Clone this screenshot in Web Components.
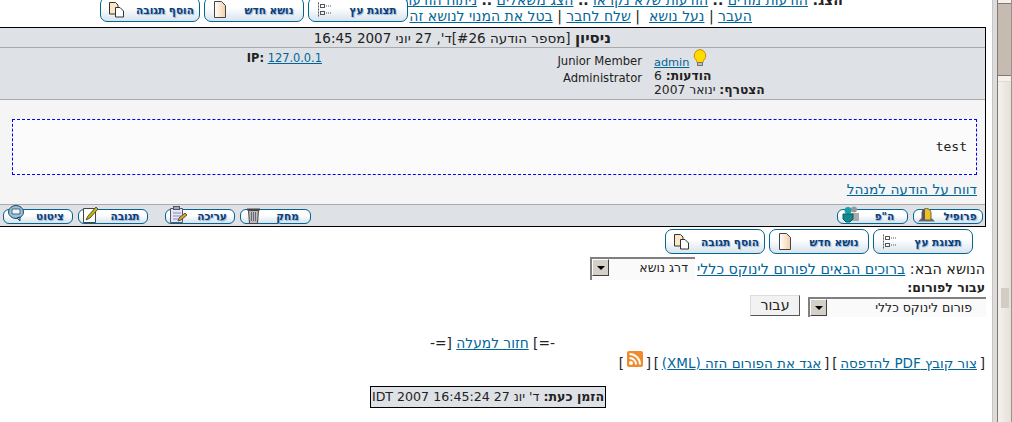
<!DOCTYPE html>
<html lang="he">
<head>
<meta charset="utf-8">
<title>פורום</title>
<style>
  html, body { margin: 0; height: 100%; overflow: hidden; background: #fff; }
</style>
</head>
<body>
<forum-page></forum-page>

<script>
const ICONS = {
  reply: `<svg width="17" height="17" viewBox="0 0 17 17"><path d="M1.500 1.500h6l2.500 2.500v9h-8.500z" fill="#fbe6c8" stroke="#333"/><path d="M7.500 6.500h4.500l3.500 3.500v6h-8z" fill="#fff" stroke="#333"/></svg>`,
  page: `<svg width="12" height="17" viewBox="0 0 12 17"><defs><linearGradient id="pg" x1="0" x2="1"><stop offset="0" stop-color="#fff"/><stop offset="1" stop-color="#f3cfa8"/></linearGradient></defs><path d="M.5.5h7l4 4v12H.5z" fill="url(#pg)" stroke="#444"/></svg>`,
  tree: `<svg width="15" height="15" viewBox="0 0 15 15"><g fill="none" stroke="#555"><path d="M1.500.5v14" stroke-dasharray="2 1"/><rect x="3.500" y="2.500" width="4" height="3"/><rect x="3.500" y="9.500" width="4" height="3"/><path d="M9 4h5M9 11h5" stroke-dasharray="1 1"/></g></svg>`,
  quote: `<svg width="16" height="16" viewBox="0 0 16 16" style="margin-top:-6px"><ellipse cx="8" cy="7" rx="7.500" ry="6.500" fill="#8fc3e6" stroke="#245"/><path d="M4 4h8v5H4z" fill="#eaf4fb" stroke="#567"/><path d="M9 13l3 3v-4z" fill="#8fc3e6" stroke="#245"/></svg>`,
  replyPen: `<svg width="17" height="17" viewBox="0 0 17 17" style="margin-top:-3px"><path d="M.5 2.500h12v14H.5z" fill="#fff" stroke="#444"/><path d="M3 14l2-4 8-9 2 2-8 9z" fill="#c8b400" stroke="#554"/></svg>`,
  edit: `<svg width="17" height="17" viewBox="0 0 17 17" style="margin-top:-3px"><path d="M.5 2.500h12v14H.5z" fill="#e6e6f6" stroke="#556"/><rect x="3.500" y=".5" width="6" height="3" fill="#9ab" stroke="#556"/><path d="M3 7h8M3 10h8M3 13h5" stroke="#8a8ac8"/><path d="M8 15l1-3 6-5 2 2-6 5z" fill="#e0a020" stroke="#554"/></svg>`,
  trash: `<svg width="13" height="17" viewBox="0 0 13 17" style="margin-top:-2px"><path d="M1.500 3.500h10l-1 13h-8z" fill="#bbb" stroke="#444"/><path d="M0 2.500h13" stroke="#444" stroke-width="2"/><path d="M4.500 5v9M6.500 5v9M8.500 5v9" stroke="#667"/></svg>`,
  pm: `<svg width="17" height="17" viewBox="0 0 17 17" style="margin-top:-3px"><circle cx="12" cy="3.500" r="3" fill="#999"/><path d="M8 7h9v8h-7z" fill="#aaa"/><circle cx="6" cy="4.500" r="3.500" fill="#18a0a8"/><path d="M1 8h10v5l-3 3H4l-3-3z" fill="#128890" stroke="#0a5a60"/></svg>`,
  profile: `<svg width="17" height="14" viewBox="0 0 17 14" style="margin-top:-2px"><path d="M0 13.500h17l-3-3H3z" fill="#667"/><path d="M4 12V5a4.500 4.500 0 0 1 9 0v7z" fill="#f0c020" stroke="#664"/><path d="M4 12V5a4.500 4.500 0 0 1 3-4.200V12z" fill="#556"/></svg>`
};

const SHARED_FONT = `"DejaVu Sans", "Liberation Sans", sans-serif`;

class ForumButton extends HTMLElement {
  connectedCallback() {
    const small = this.hasAttribute('small');
    const icon = ICONS[this.getAttribute('icon')] || '';
    this.attachShadow({ mode: 'open' }).innerHTML = `
      <style>
        :host { display: inline-flex; align-items: center; box-sizing: border-box; direction: rtl; flex: none;
          width: ${this.getAttribute('w') || 100}px; height: ${small ? 15 : 25}px;
          border: 1px solid #05638f; border-radius: ${small ? 6 : 7}px;
          background: linear-gradient(#fff 40%, #d8e4ee); }
        span { flex: 1; text-align: center; font: bold 10.500px ${SHARED_FONT}; color: #0a3f78;
          text-shadow: 1px 1px 1px #8fb0d6; white-space: nowrap; }
        i { display: flex; flex: none; width: ${small ? 24 : 30}px; justify-content: center; align-items: center; height: 100%; }
        svg { flex: none; overflow: visible; }
      </style>
      <span><slot></slot></span><i>${icon}</i>`;
  }
}
customElements.define('forum-button', ForumButton);

class FakeSelect extends HTMLElement {
  connectedCallback() {
    this.attachShadow({ mode: 'open' }).innerHTML = `
      <style>
        :host { display: inline-flex; box-sizing: border-box; direction: ltr; flex: none; background: #fafafa;
          height: ${this.getAttribute('h') || 23}px; width: ${this.getAttribute('w')}px;
          border-left: 2px solid #808080; border-top: 2px solid #808080; }
        b { flex: none; width: 17px; height: 17px; background: #d4d0c8; border: 1px solid; border-color: #fff #404040 #404040 #fff;
          display: flex; align-items: center; justify-content: center; box-sizing: border-box; }
        b::after { content: ""; border: 4px solid transparent; border-top: 4px solid #000; border-bottom: 0; }
        span { flex: 1; direction: rtl; font-size: 12.500px; line-height: 16px; padding: 1px ${this.getAttribute('pad') || 7}px 0 0; white-space: nowrap; }
      </style>
      <b></b><span><slot></slot></span>`;
  }
}
customElements.define('fake-select', FakeSelect);

class PostCard extends HTMLElement {
  constructor() {
    super();
    this.attachShadow({ mode: 'open' }).innerHTML = `
      <style>
        :host { display: block; border: 1px solid #000; border-left: 0; color: #222; box-sizing: border-box; width: 986px; margin-right: 6px; direction: rtl; }
        .bar { height: 20px; background: #dee1e5; border-bottom: 1px solid #aaa; box-sizing: border-box; display: flex; align-items: center; padding-right: 374px; white-space: nowrap; font-size: 13.500px; }
        .head { height: 52px; background: #dee1e5; border-bottom: 1px solid #aaa; box-sizing: border-box; display: flex; }
        .user { width: 331px; flex: none; text-align: left; font-size: 12.300px; line-height: 14px; padding-top: 1px; box-sizing: border-box; }
        .rank { width: 300px; flex: none; margin-right: 12px; direction: ltr; text-align: right; font-size: 11.600px; line-height: 17px; padding-top: 5px; }
        .ip { flex: 1; direction: ltr; text-align: right; padding: 3px 20px 0 0; font-size: 11.400px; }
        .body { background: #f5f5f5; height: 104px; padding: 19px 8px 0 12px; box-sizing: border-box; }
        .msg { height: 56px; background: #fbfbfb; border: 1px dashed #0000ff; box-sizing: border-box; font: 13px "DejaVu Sans Mono", monospace; padding: 19px 9px 0 0; }
        .report { font-size: 13.700px; margin: 6px 0 0 -1px; line-height: 17px; text-align: right; }
        .foot { height: 22px; background: #dee1e5; border-top: 1px solid #aaa; box-sizing: border-box; display: flex; align-items: center; justify-content: space-between; padding: 1px 2px 0 3px; }
      </style>
      <div class="bar"><slot name="title"></slot></div>
      <div class="head">
        <div class="user"><slot name="user"></slot></div>
        <div class="rank"><slot name="rank"></slot></div>
        <div class="ip"><slot name="ip"></slot></div>
      </div>
      <div class="body">
        <div class="msg"><slot name="message"></slot></div>
        <div class="report"><slot name="report"></slot></div>
      </div>
      <div class="foot"><slot name="foot-right"></slot><slot name="foot-left"></slot></div>`;
  }
}
customElements.define('post-card', PostCard);

class PageScrollbar extends HTMLElement {
  constructor() {
    super();
    this.attachShadow({ mode: 'open' }).innerHTML = `
      <style>
        :host { display: flex; flex: none; width: 20px; height: 422px; box-sizing: border-box; background: #dcdcdc; border-left: 1px solid #c4c4c4; padding-left: 4px; }
        .track { flex: 1; display: flex; flex-direction: column; border-left: 1px solid #84786c; border-right: 1px solid #9c9288; }
        .cap { height: 4px; background: #f4f1ec; border-bottom: 1px solid #84786c; box-sizing: border-box; }
        .dark { height: 72px; background: #c6bbb0; border-bottom: 1px solid #84786c; box-sizing: border-box; }
        .low { height: 6px; background: #f4f1ec; border-bottom: 1px solid #ddd; box-sizing: border-box; }
        .rest { flex: 1; background: linear-gradient(90deg, #f4f1ec, #e6e0d9); padding-top: 206px; display: flex; justify-content: center; }
        .grip { width: 8px; height: 20px; background: radial-gradient(circle, #d2ccc5 0 1px, transparent 1px) 0 0 / 2px 2px; }
      </style>
      <div class="track">
        <div class="cap"></div><div class="dark"></div><div class="low"></div>
        <div class="rest"><div class="grip"></div></div>
      </div>`;
  }
}
customElements.define('page-scrollbar', PageScrollbar);

class ForumPage extends HTMLElement {
  constructor() {
    super();
    this.attachShadow({ mode: 'open' }).innerHTML = `
      <style>
        :host { display: flex; height: 422px; width: 1012px; overflow: hidden; font-family: ${SHARED_FONT}; font-size: 12.500px; color: #222; }
        .main { width: 992px; height: 422px; overflow: hidden; flex: none; }
        .inner { margin-top: -8px; direction: rtl; }
        a { color: #006699; text-decoration: underline; }
        .links { font-size: 14px; line-height: 17px; height: 35px; position: relative; }
        .line1 { height: 16px; padding-right: 149px; white-space: nowrap; }
        .line2 { padding-right: 240px; white-space: nowrap; }
        .topbtns { display: flex; gap: 4px; position: absolute; left: 100px; top: 5px; direction: ltr; }
        .botbtns { display: flex; gap: 4px; direction: ltr; margin: 2px 0 0 665px; }
        .next { display: flex; align-items: center; gap: 2px; height: 23px; padding-right: 7px; margin-top: 3px; font-size: 14.300px; white-space: nowrap; }
        .jump { padding-right: 7px; font: bold 12.500px/15px ${SHARED_FONT}; height: 15px; }
        .jumpctl { display: flex; padding-right: 6px; gap: 8px; height: 22px; }
        .jumpctl fake-select { margin-top: 2px; }
        .go { font-size: 14.300px; width: 50px; height: 21px; box-sizing: border-box; background: #f2f2f2; border: 1px solid; border-color: #ddd #555 #555 #ddd; text-align: center; line-height: 18px; }
        .back { text-align: center; font-size: 13.800px; margin-top: 18px; height: 16px; line-height: 16px; padding-right: 7px; white-space: nowrap; }
        .rss { display: flex; align-items: center; padding-right: 7px; font-size: 13.500px; word-spacing: -1.500px; height: 22px; margin-top: 1px; white-space: pre; }
        .rss a { word-spacing: 0; }
        .rss svg { margin: -8px 0 0; flex: none; }
        .now { width: 236px; margin: 12px 386px 0 0; box-sizing: border-box; height: 22px; background: #dee1e5; border: 1px solid #000; font-size: 12.600px; white-space: nowrap; line-height: 19px; text-align: center; }
      </style>
      <div class="main"><div class="inner">
        <div class="links">
          <div class="line1"><b>הצג:</b> <a>הודעות מודים</a> <b>..</b> <a>הודעות שלא נקראו</a> <b>..</b> <a>הצג משאלים</a> <b>..</b> <a>ניתוח הודעות</a></div>
          <div class="line2"><a>העבר</a> | <a>נעל נושא</a> &nbsp;| <a>שלח לחבר</a> | <a>בטל את המנוי לנושא זה</a></div>
          <div class="topbtns">
            <forum-button icon="reply">הוסף תגובה</forum-button>
            <forum-button icon="page">נושא חדש</forum-button>
            <forum-button icon="tree">תצוגת עץ</forum-button>
          </div>
        </div>
        <post-card>
          <span slot="title"><b style="font-size:15px">ניסיון</b> [מספר הודעה #26]ד', 27 יוני 2007 16:45</span>
          <div slot="user">
            <div dir="ltr" style="height:20px;font-size:11.300px;line-height:24px;white-space:nowrap"><a>admin</a> <svg width="14" height="17" viewBox="0 0 14 17"><path d="M7 .5a6.200 6.200 0 0 0-3.500 11l.5 2h6l.5-2A6.200 6.200 0 0 0 7 .5z" fill="#ffdc00" stroke="#d08a10"/><rect x="4.500" y="13.500" width="5" height="3" fill="#bbb" stroke="#777"/></svg></div>
            <b>הודעות:</b> 6<br><b>הצטרף:</b> ינואר 2007
          </div>
          <div slot="rank">Junior Member<br>Administrator</div>
          <div slot="ip"><b>IP:</b> <a>127.0.0.1</a></div>
          <span slot="message">test</span>
          <a slot="report">דווח על הודעה למנהל</a>
          <div slot="foot-right" style="display:flex;gap:5px">
            <forum-button small w="70" icon="profile">פרופיל</forum-button>
            <forum-button small w="71" icon="pm">ה"פ</forum-button>
          </div>
          <div slot="foot-left" style="display:flex;gap:5px;direction:ltr">
            <forum-button small w="70" icon="quote">ציטוט</forum-button>
            <forum-button small w="70" icon="replyPen">תגובה</forum-button>
            <forum-button small w="70" icon="edit" style="margin-left:12px">עריכה</forum-button>
            <forum-button small w="71" icon="trash">מחק</forum-button>
          </div>
        </post-card>
        <div class="botbtns">
          <forum-button icon="reply">הוסף תגובה</forum-button>
          <forum-button icon="page">נושא חדש</forum-button>
          <forum-button icon="tree">תצוגת עץ</forum-button>
        </div>
        <div class="next"><span>הנושא הבא: <a>ברוכים הבאים לפורום לינוקס כללי</a></span><fake-select w="105">דרג נושא</fake-select></div>
        <div class="jump">עבור לפורום:</div>
        <div class="jumpctl"><fake-select w="178" h="20" pad="14">פורום לינוקס כללי</fake-select><div class="go">עבור</div></div>
        <div class="back">-=] <a>חזור למעלה</a> [=-</div>
        <div class="rss"><span>[ <a>צור קובץ PDF להדפסה</a> ] [ <a>אגד את הפורום הזה (XML)</a> ] [ </span><svg width="16" height="16" viewBox="0 0 16 16"><rect width="16" height="16" rx="2" fill="#f08a2a"/><circle cx="4" cy="12" r="2" fill="#fff"/><path d="M2.500 7a6.500 6.500 0 0 1 6.500 6.500M2.500 3a10.500 10.500 0 0 1 10.500 10.500" fill="none" stroke="#fff" stroke-width="2"/></svg><span> ]</span></div>
        <div class="now"><b>הזמן כעת:</b> ד' יונ 27 16:45:24 2007 IDT</div>
      </div></div>
      <page-scrollbar></page-scrollbar>`;
  }
}
customElements.define('forum-page', ForumPage);
</script>
</body>
</html>
